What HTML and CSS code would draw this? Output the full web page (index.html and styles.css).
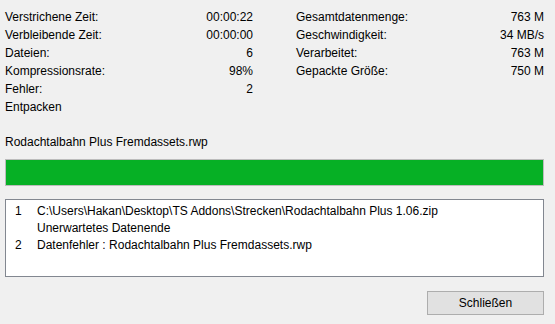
FILE: index.html
```html
<!DOCTYPE html>
<html>
<head>
<meta charset="utf-8">
<link rel="stylesheet" href="styles.css">
</head>
<body>
<div class="dialog">
  <div class="stats">
    <div class="col">
      <div class="row"><span>Verstrichene Zeit:</span><span>00:00:22</span></div>
      <div class="row"><span>Verbleibende Zeit:</span><span>00:00:00</span></div>
      <div class="row"><span>Dateien:</span><span>6</span></div>
      <div class="row"><span>Kompressionsrate:</span><span>98%</span></div>
      <div class="row"><span>Fehler:</span><span>2</span></div>
      <div class="row"><span>Entpacken</span></div>
    </div>
    <div class="col">
      <div class="row"><span>Gesamtdatenmenge:</span><span>763 M</span></div>
      <div class="row"><span>Geschwindigkeit:</span><span>34 MB/s</span></div>
      <div class="row"><span>Verarbeitet:</span><span>763 M</span></div>
      <div class="row"><span>Gepackte Größe:</span><span>750 M</span></div>
    </div>
  </div>
  <div class="file">Rodachtalbahn Plus Fremdassets.rwp</div>
  <div class="progress"><div class="fill" style="width:100%"></div></div>
  <div class="log">
    <div class="entry"><span class="num">1</span><span>C:\Users\Hakan\Desktop\TS Addons\Strecken\Rodachtalbahn Plus 1.06.zip</span></div>
    <div class="entry"><span class="num"></span><span>Unerwartetes Datenende</span></div>
    <div class="entry"><span class="num">2</span><span>Datenfehler : Rodachtalbahn Plus Fremdassets.rwp</span></div>
  </div>
  <div class="actions"><button class="btn">Schließen</button></div>
</div>
</body>
</html>
```
FILE: styles.css
```css
html, body {
  margin: 0;
  padding: 0;
  background: #f0f0f0;
}
body {
  width: 555px;
  height: 324px;
  overflow: hidden;
  font-family: "Liberation Sans", Arial, sans-serif;
  font-size: 12px;
  color: #000;
}
.dialog {
  padding: 8px 11px 0 5px;
  display: flex;
  flex-direction: column;
}
.stats {
  display: grid;
  grid-template-columns: 248px 248px;
  column-gap: 43px;
}
.col {
  display: flex;
  flex-direction: column;
}
.row {
  height: 18px;
  line-height: 18px;
  display: flex;
  justify-content: space-between;
  white-space: nowrap;
}
.file {
  margin-top: 17px;
  height: 18px;
  line-height: 18px;
}
.progress {
  margin-top: 8px;
  height: 25px;
  border: 1px solid #bcbcbc;
  background: #e6e6e6;
}
.fill {
  height: 100%;
  background: #06b025;
}
.log {
  margin-top: 13px;
  height: 73px;
  border: 1px solid #828790;
  background: #fff;
  padding-top: 3px;
}
.entry {
  display: flex;
  height: 17px;
  line-height: 17px;
  white-space: nowrap;
}
.num {
  width: 22px;
  padding-left: 9px;
  box-sizing: content-box;
}
.actions {
  margin-top: 14px;
  display: flex;
  justify-content: flex-end;
}
.btn {
  width: 117px;
  height: 24px;
  background: #e1e1e1;
  border: 1px solid #adadad;
  font-family: inherit;
  font-size: 12px;
  color: #000;
  padding: 0;
}
```
